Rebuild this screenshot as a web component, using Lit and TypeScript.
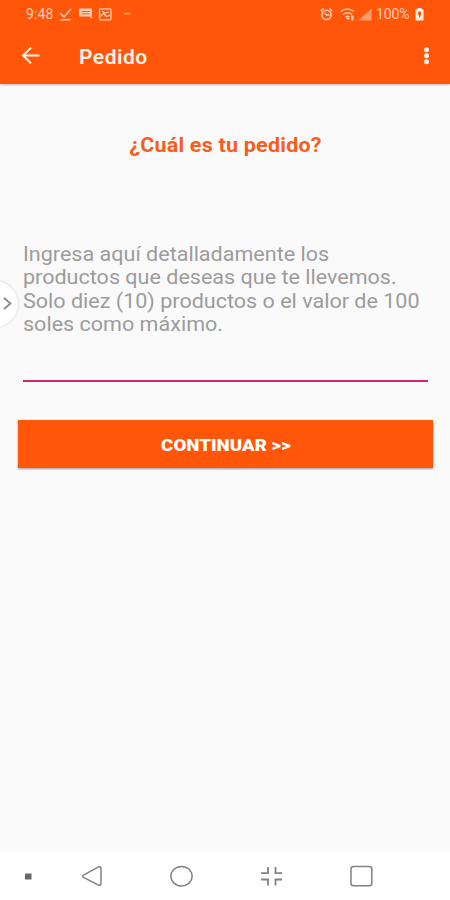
import { LitElement, html, css } from "lit";
import { customElement } from "lit/decorators.js";

@customElement("status-bar")
class StatusBar extends LitElement {
  static styles = css`
    :host { display: flex; align-items: center; justify-content: space-between; height: 28px; padding: 0 25px 0 26px; color: #ffcdb5; font-size: 14px; }
    .group { display: flex; align-items: center; height: 28px; }
    svg { display: block; flex: none; fill: none; stroke: currentColor; }
    .time { width: 28px; letter-spacing: 0.1px; }
    .pct { width: 39px; letter-spacing: -0.1px; margin-left: 4px; }
  `;
  render() {
    return html`
      <div class="group">
        <span class="time">9:48</span>
        <svg width="82" height="28" viewBox="0 0 82 28">
          <path d="M6 13l4 4 7-8M6.500 19.700h10" stroke-width="1.500" />
          <path d="M25 8.500h13v10.500l-2.500-2.500H25z" fill="currentColor" stroke="none" />
          <path d="M27.500 11.500h8M27.500 13.800h8" stroke="#ff5a0e" stroke-width="1" />
          <rect x="45.500" y="8.800" width="11.500" height="11" rx="1" stroke-width="1.300" />
          <path d="M46 16.500l3.500-3 3 3 4-1.500M48 11l3 2 4-1" stroke-width="1.200" />
          <path d="M70 13.700h6.500" stroke-width="1.100" />
        </svg>
      </div>
      <div class="group">
        <svg width="52" height="28" viewBox="0 0 52 28">
          <circle cx="6.500" cy="14.900" r="4.600" stroke-width="1.600" />
          <path d="M.7 11l3-2.700M12.300 11l-3-2.700M4.300 13l2.400 2h2.800" stroke-width="1.500" />
          <path d="M20.500 11.500q7-5 13.500 0M23 14.500q4.500-3.500 9 0M25.500 17q2.500-1.700 4 0" stroke-width="1.300" />
          <path d="M25.500 17l2.500 3 2-2zM31 15.500h2.500v5H31z" fill="currentColor" stroke="none" />
          <path d="M38 20.500L51.500 8.500v12z" fill="#ff9a6b" stroke="none" />
        </svg>
        <span class="pct">100%</span>
        <svg width="10" height="28" viewBox="0 0 10 28">
          <path d="M.5 9.500H2.500V8h4v1.500h2v11h-8z" fill="#fff0e5" stroke="none" />
          <path d="M3.300 11.500h2.700v3l-1 3h-1v-2.500h-1z" fill="#ff560a" stroke="none" />
        </svg>
      </div>
    `;
  }
}

@customElement("nav-bar")
class NavBar extends LitElement {
  static styles = css`
    :host { display: block; height: 48px; background: #fff; }
    svg { display: block; fill: none; stroke: #828282; stroke-width: 1.500; }
  `;
  render() {
    return html`
      <svg width="450" height="48" viewBox="0 0 450 48">
        <rect x="25" y="21.500" width="6.500" height="6" fill="#686868" stroke="none" />
        <path d="M83.500 23.200L98.500 14.900q2.500-.9 2.500 1.500v15.200q0 2.400-2.500 1.500L83.500 25.400q-1.500-1.100 0-2.200z" />
        <ellipse cx="181.500" cy="24.200" rx="10.600" ry="9.800" />
        <path d="M261 21.200h7V15M282 21.200h-6.500V15M261 27.500h7v6M282 27.500h-6.500v6" stroke-width="1.800" />
        <rect x="351" y="14.500" width="20.800" height="19.200" rx="2.500" />
      </svg>
    `;
  }
}

@customElement("app-root")
class AppRoot extends LitElement {
  static styles = css`
    :host { display: flex; flex-direction: column; position: relative; width: 450px; height: 900px; overflow: hidden; background: #fafafa; font-family: Roboto, sans-serif; }
    .header { flex: none; height: 84px; background: #ff560a; box-shadow: 0 1px 2px #0004; }
    .toolbar { display: flex; align-items: center; height: 56px; color: #fff3ec; }
    .toolbar svg { display: block; flex: none; }
    .heading { flex: 1; padding-top: 2px; font-size: 21px; font-weight: 600; letter-spacing: 0.5px; }
    .content { flex: 1; display: flex; flex-direction: column; padding: 0 17px 0 18px; }
    .question { margin-top: 48px; height: 26px; line-height: 26px; text-align: center; color: #f75d1c; font-size: 20px; font-weight: 700; letter-spacing: 0.2px; transform: scaleX(1.075); }
    .field { margin: 84px 5px 0 4.500px; padding-top: 1px; height: 137px; border-bottom: 2px solid #d8256f; color: #9c9c9c; font-size: 20px; line-height: 23.400px; white-space: nowrap; }
    .line { display: block; width: max-content; transform-origin: left; transform: scaleX(1.077); }
    .button { margin-top: 38px; height: 48px; display: flex; align-items: center; justify-content: center; background: #ff560a; color: #fff; font-size: 17px; font-weight: 900; box-shadow: 0 1px 2px #0006; }
    .label { padding-top: 1px; transform: scaleX(1.1); }
    .handle { position: absolute; left: -28px; top: 281px; width: 46px; height: 46px; border-radius: 50%; background: #fff; box-shadow: 0 0 3px #0003; }
    .handle svg { display: block; margin-left: 28px; }
  `;
  render() {
    const lines = [
      "Ingresa aquí detalladamente los",
      "productos que deseas que te llevemos.",
      "Solo diez (10) productos o el valor de 100",
      "soles como máximo.",
    ];
    return html`
      <div class="header">
        <status-bar></status-bar>
        <div class="toolbar">
          <svg width="79" height="56" viewBox="0 0 79 56" fill="none" stroke="currentColor" stroke-width="2">
            <path d="M39.500 27.500H23M31 19.800l-8 7.700 8 7.700" />
          </svg>
          <span class="heading">Pedido</span>
          <svg width="48" height="56" viewBox="0 0 48 56" fill="currentColor">
            <circle cx="24.500" cy="21.800" r="2.500" /><circle cx="24.500" cy="27.800" r="2.500" /><circle cx="24.500" cy="33.800" r="2.500" />
          </svg>
        </div>
      </div>
      <div class="content">
        <div class="question">¿Cuál es tu pedido?</div>
        <div class="field">${lines.map((l) => html`<span class="line">${l}</span>`)}</div>
        <div class="button"><span class="label">CONTINUAR &gt;&gt;</span></div>
      </div>
      <div class="handle">
        <svg width="18" height="46" viewBox="0 0 18 46" fill="none" stroke="#858585" stroke-width="1.700"><path d="M4 17l6.500 5.500L4 28" /></svg>
      </div>
      <nav-bar></nav-bar>
    `;
  }
}
